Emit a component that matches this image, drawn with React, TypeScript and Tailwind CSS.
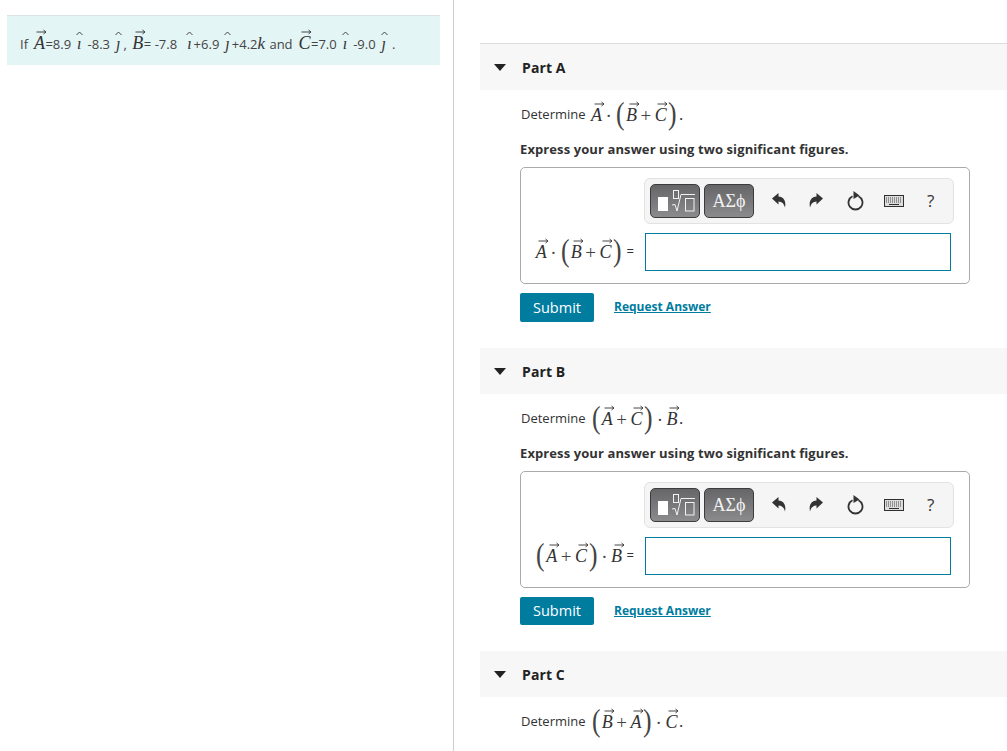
import type { ReactNode } from 'react';

const serif = "font-['Liberation_Serif',serif]";

function Vec({ children }: { children: string }) {
  return (
    <span className={`relative inline-block italic ${serif} text-[18px] leading-none px-[0.5px] text-[#333]`}>
      {children}
      <svg className="absolute left-[3px] top-[-5px]" width="11" height="6" viewBox="0 0 11 6" fill="none">
        <path d="M0.5 3H10M7.5 1L10 3L7.5 5" stroke="#333" strokeWidth="0.9" />
      </svg>
    </span>
  );
}

function Hat({ children, tight }: { children: string; tight?: boolean }) {
  return (
    <span className={`relative inline-block italic ${serif} text-[16px] leading-none ml-[6px] ${tight ? 'mr-[2px]' : 'mr-[6px]'} text-[#333]`}>
      {children}
      <svg className="absolute left-[-1px] top-[-5px]" width="7" height="5" viewBox="0 0 7 5" fill="none">
        <path d="M0.5 4L3.5 1L6.5 4" stroke="#333" strokeWidth="0.9" />
      </svg>
    </span>
  );
}

function Paren({ children }: { children: string }) {
  return <span className={`${serif} text-[32px] leading-none text-[#444] scale-x-[0.8] -translate-y-[2px] inline-block`}>{children}</span>;
}

function Op({ children }: { children: string }) {
  return <span className={`${serif} text-[19px] leading-none mx-[3px] text-[#444]`}>{children}</span>;
}

function Expr({ a, b, c, first }: { a: string; b: string; c: string; first: boolean }) {
  if (first) {
    return (
      <span className="inline-flex items-center">
        <Vec>{a}</Vec>
        <Op>·</Op>
        <Paren>(</Paren>
        <Vec>{b}</Vec>
        <Op>+</Op>
        <Vec>{c}</Vec>
        <Paren>)</Paren>
      </span>
    );
  }
  return (
    <span className="inline-flex items-center">
      <Paren>(</Paren>
      <Vec>{a}</Vec>
      <Op>+</Op>
      <Vec>{b}</Vec>
      <Paren>)</Paren>
      <Op>·</Op>
      <Vec>{c}</Vec>
    </span>
  );
}

function TemplatesIcon() {
  return (
    <svg width="48" height="32" viewBox="0 0 48 32" fill="none">
      <rect x="7" y="12" width="10" height="14" fill="#fff" />
      <rect x="22.5" y="5.5" width="5" height="8" stroke="#f2f2f2" />
      <path d="M21 20L24 19.5L26 26L30 9.5H44" stroke="#f2f2f2" />
      <rect x="34.5" y="13.5" width="8.5" height="12.5" stroke="#f2f2f2" />
    </svg>
  );
}

function Undo({ flip }: { flip?: boolean }) {
  return (
    <svg width="14" height="15" viewBox="0 0 14 15" className={flip ? '-scale-x-100' : ''}>
      <path d="M0 5.5L6.5 0V3.5C11 3.5 14.5 7.5 13 14.5C12 10.5 10 8.5 6.5 8.5V11.5Z" fill="#333" />
    </svg>
  );
}

function Reset() {
  return (
    <svg width="17" height="20" viewBox="0 0 17 20" fill="none">
      <path d="M5.5 5.2A7 7 0 1 0 11.5 5.2" stroke="#333" strokeWidth="1.8" />
      <path d="M6.5 0L12.5 4.5L6.5 8Z" fill="#333" />
    </svg>
  );
}

function Keyboard() {
  return (
    <svg width="20" height="12" viewBox="0 0 20 12" fill="none">
      <rect x="0.5" y="0.5" width="19" height="11" fill="#ddd" stroke="#2f2f2f" />
      <path d="M2 3H18M2 5H18M2 7H18" stroke="#444" strokeWidth="1" strokeDasharray="1 1" />
      <path d="M5 9.5H15" stroke="#2f2f2f" strokeWidth="1" />
    </svg>
  );
}

function Toolbar() {
  return (
    <div className="flex items-center h-[46px] w-[310px] ml-[123px] bg-[#f5f5f5] border border-[#e2e2e2] rounded-[6px] pl-[5px]">
      <button className="w-[50px] h-[34px] flex items-center justify-center rounded-[5px] border border-[#3c3c3c] bg-gradient-to-b from-[#666668] to-[#8b8b8d]">
        <TemplatesIcon />
      </button>
      <button className={`ml-[4px] w-[50px] h-[34px] rounded-[5px] border border-[#3c3c3c] bg-gradient-to-b from-[#666668] to-[#8b8b8d] text-[#f2f2f2] text-[18px] ${serif}`}>
        ΑΣϕ
      </button>
      <div className="w-[17px]" />
      <span className="w-[15px] flex justify-center -mt-[1px]"><Undo /></span>
      <span className="ml-[22px] w-[15px] flex justify-center -mt-[1px]"><Undo flip /></span>
      <span className="ml-[23px] w-[18px] flex justify-center"><Reset /></span>
      <span className="ml-[20px] w-[20px] flex justify-center"><Keyboard /></span>
      <span className="ml-[23px] text-[17px] text-[#333]">?</span>
    </div>
  );
}

function Part({ name, expr, answer, short }: { name: string; expr: ReactNode; answer?: boolean; short?: boolean }) {
  return (
    <section className={answer ? 'mb-[26px]' : ''}>
      <div className="h-[46px] flex items-center bg-[#f7f7f7]">
        <span className="ml-[14px] w-0 h-0 border-x-[6px] border-x-transparent border-t-[7px] border-t-[#222]" />
        <h2 className="ml-[16px] text-[14px] font-bold tracking-[0.1px] text-[#222]">{name}</h2>
      </div>
      <div className="pl-[40px]">
        <p className="h-[48px] pt-[2px] flex items-center text-[13px] text-[#333]">
          <span className="ml-[1px] mr-[5px]">Determine</span>
          {expr}
          <span className={`${serif} text-[17px] ml-[1px]`}>.</span>
        </p>
        {answer && (
          <>
            <p className="h-[22px] leading-[22px] text-[13px] font-bold tracking-[0.1px] text-[#333]">Express your answer using two significant figures.</p>
            <div className="mt-[7px] w-[450px] h-[117px] border border-[#aaa] rounded-[5px] pt-[10px]">
              <Toolbar />
              <div className="flex items-center mt-[9px]">
                <span className="w-[124px] pr-[8px] flex items-center justify-end text-[13px] text-[#333]">
                  {expr}
                  <span className="ml-[4px] mr-[3px]">=</span>
                </span>
                <input className="w-[306px] h-[38px] border border-[#007c9f] bg-white" aria-label={`${name} answer`} />
              </div>
            </div>
            <div className="mt-[9px] flex items-center">
              <button className={`w-[74px] ${short ? 'h-[28px]' : 'h-[29px]'} bg-[#007c9f] rounded-[2px] text-white text-[14.5px]`}>Submit</button>
              <a href="#" className="ml-[20px] mb-[1px] text-[12px] font-bold text-[#007c9f] underline">Request Answer</a>
            </div>
          </>
        )}
      </div>
    </section>
  );
}

export default function App() {
  return (
    <div className="h-[751px] overflow-hidden flex bg-white font-['Open_Sans',sans-serif]">
      <aside className="w-[454px] shrink-0 border-r border-[#c9ced6] pl-[7px] pt-[15px]">
        <div className="w-[433px] h-[50px] flex items-baseline pl-[13px] pt-[15px] bg-[#e4f5f6] border-t border-[#dbe3e6] text-[13px] text-[#444]">
          <span className="mr-[2px]">If&nbsp;</span>
          <Vec>A</Vec>
          <span>=8.9</span>
          <Hat>ı</Hat>
          <span>-8.3</span>
          <Hat>ȷ</Hat>
          <span className="-ml-[3px] mr-[5px]">,</span>
          <Vec>B</Vec>
          <span className="mr-[4px]">= -7.8</span>
          <Hat tight>ı</Hat>
          <span>+6.9</span>
          <Hat tight>ȷ</Hat>
          <span>+4.2</span>
          <span className={`${serif} italic text-[17px] text-[#333] mr-[1px]`}>k</span>
          <span className="mr-[2px]">&nbsp;and&nbsp;</span>
          <Vec>C</Vec>
          <span>=7.0</span>
          <Hat>ı</Hat>
          <span>-9.0</span>
          <Hat>ȷ</Hat>
          <span>.</span>
        </div>
      </aside>
      <main className="flex-1 ml-[26px] mt-[43px]">
        <div className="border-t border-[#ddd]">
          <Part answer name="Part A" expr={<Expr first a="A" b="B" c="C" />} />
          <Part answer short name="Part B" expr={<Expr first={false} a="A" b="C" c="B" />} />
          <Part name="Part C" expr={<Expr first={false} a="B" b="A" c="C" />} />
        </div>
      </main>
    </div>
  );
}
